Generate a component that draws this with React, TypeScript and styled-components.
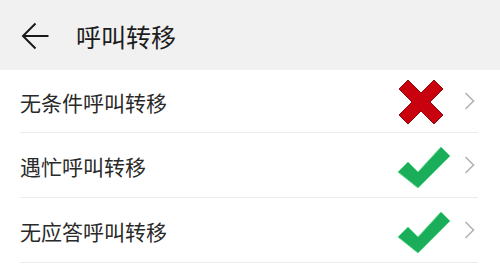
import React from "react";
import styled, { createGlobalStyle } from "styled-components";

const Global = createGlobalStyle`
  html, body { margin: 0; padding: 0; background: #ffffff; }
  body { font-family: "Noto Sans CJK SC", "Noto Sans", sans-serif; }
`;

const Page = styled.div`
  width: 500px;
  height: 267px;
  background: #ffffff;
  overflow: hidden;
`;

const Header = styled.header`
  height: 70px;
  background: #f1f1f1;
  display: flex;
  align-items: center;
  padding-left: 20px;
  box-sizing: border-box;
`;

const BackButton = styled.div`
  width: 30px;
  height: 30px;
  display: flex;
  align-items: center;
  justify-content: center;
  margin-right: 26px;
  margin-top: 1px;
`;

const Title = styled.h1`
  margin: 0;
  font-size: 25px;
  font-weight: 400;
  color: #1d1d1d;
  line-height: 1;
  margin-top: 2px;
`;

const List = styled.ul`
  list-style: none;
  margin: 0;
  padding: 0;
`;

const Row = styled.li`
  height: 65px;
  margin: 0 22px 0 20px;
  border-bottom: 1px solid #ececec;
  box-sizing: border-box;
  display: flex;
  align-items: center;
  &:first-child { height: 63px; }
`;

const Label = styled.span`
  flex: 1;
  font-size: 21px;
  color: #2a2a2a;
  line-height: 1;
  padding-top: 3px;
`;

const Status = styled.div`
  width: 56px;
  display: flex;
  align-items: center;
  justify-content: flex-start;
  margin-right: 11px;
`;

const Chevron = styled.div`
  width: 11px;
  height: 20px;
  display: flex;
  align-items: center;
  margin-right: 3px;
`;

const CrossIcon = styled.svg`
  margin-left: 2px;
  margin-top: 2px;
`;

const CheckIcon = styled.svg`
  margin-top: 3px;
`;

const Cross = () => (
  <CrossIcon width="44" height="44" viewBox="0 0 44 44">
    <polygon
      points="0,9 9,0 22,13 35,0 44,9 31,22 44,35 35,44 22,31 9,44 0,35 13,22"
      fill="#c9000d"
      stroke="#8e0a0f"
      strokeWidth="1"
      strokeLinejoin="miter"
    />
  </CrossIcon>
);

const Check = () => (
  <CheckIcon width="54" height="44" viewBox="0 0 54 44">
    <polygon
      points="1,27 11,17 21,27 44,2 53,11 21,43"
      fill="#1aad5a"
      stroke="#5fdc8c"
      strokeWidth="1"
      strokeLinejoin="miter"
    />
  </CheckIcon>
);

const items = [
  { label: "无条件呼叫转移", on: false },
  { label: "遇忙呼叫转移", on: true },
  { label: "无应答呼叫转移", on: true },
];

export default function App() {
  return (
    <Page>
      <Global />
      <Header>
        <BackButton>
          <svg width="30" height="30" viewBox="0 0 30 30" fill="none">
            <path d="M3 15 H28.5" stroke="#1a1a1a" strokeWidth="2" />
            <path d="M15.5 2.5 L3 15 L15.5 27.5" stroke="#1a1a1a" strokeWidth="2" />
          </svg>
        </BackButton>
        <Title>呼叫转移</Title>
      </Header>
      <List>
        {items.map((it) => (
          <Row key={it.label}>
            <Label>{it.label}</Label>
            <Status>{it.on ? <Check /> : <Cross />}</Status>
            <Chevron>
              <svg width="11" height="20" viewBox="0 0 11 20" fill="none">
                <path d="M1.5 2 L9.5 10 L1.5 18" stroke="#b3b3b3" strokeWidth="1.6" />
              </svg>
            </Chevron>
          </Row>
        ))}
      </List>
    </Page>
  );
}
